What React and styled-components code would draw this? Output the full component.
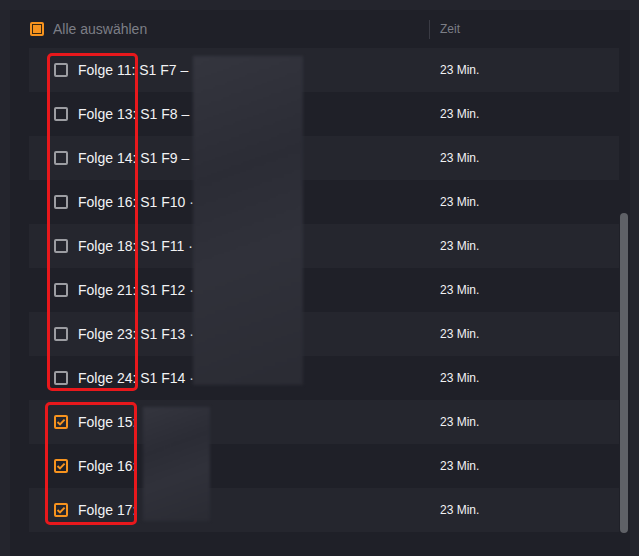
import styled, { createGlobalStyle } from 'styled-components'

const GlobalStyle = createGlobalStyle`
html, body {
    margin: 0;
    padding: 0;
    background: #24252d;
}
body {
    font-family: 'Liberation Sans', Arial, sans-serif;
}
`

const episodes = [
    { title: "Folge 11: S1 F7 – ", checked: false },
    { title: "Folge 13: S1 F8 – ", checked: false },
    { title: "Folge 14: S1 F9 – ", checked: false },
    { title: "Folge 16: S1 F10 · ", checked: false },
    { title: "Folge 18: S1 F11 · ", checked: false },
    { title: "Folge 21: S1 F12 · ", checked: false },
    { title: "Folge 23: S1 F13 · ", checked: false },
    { title: "Folge 24: S1 F14 · ", checked: false },
    { title: "Folge 15: ", checked: true },
    { title: "Folge 16: ", checked: true },
    { title: "Folge 17: ", checked: true },
]

export default function App() {
    return (
        <>
            <GlobalStyle />
            <Frame>
                <Panel>
                    <List>
                        <HeaderRow>
                            <TitleCell>
                                <AllBox />
                                <HeaderLabel>Alle auswählen</HeaderLabel>
                            </TitleCell>
                            <TimeHeader>Zeit</TimeHeader>
                        </HeaderRow>
                        {episodes.map((ep, i) => (
                            <Row key={i} striped={i % 2 === 0}>
                                <TitleCell>
                                    <Check checked={ep.checked}>
                                        {ep.checked && (
                                            <svg width="10" height="10" viewBox="0 0 10 10">
                                                <path d="M1.5 5 L4 7.4 L8.6 2.6" fill="none" stroke="#f7931e" strokeWidth="2" />
                                            </svg>
                                        )}
                                    </Check>
                                    <Title>{ep.title}</Title>
                                </TitleCell>
                                <Time>23 Min.</Time>
                            </Row>
                        ))}
                    </List>
                    <Track>
                        <Thumb />
                    </Track>
                </Panel>
                <Redact top={56} left={193} w={110} h={329} />
                <Redact top={407} left={143} w={67} h={114} />
                <Marker top={53} left={47} w={91} h={338} />
                <Marker top={402} left={45} w={92} h={123} />
            </Frame>
        </>
    )
}

const Frame = styled.div`
position: relative;
width: 639px;
height: 556px;
padding: 10px 9px 0 10px;
box-sizing: border-box;
overflow: hidden;
`
const Panel = styled.div`
display: flex;
height: 546px;
background: #1f2028;
padding-left: 19px;
`
const List = styled.div`
width: 590px;
display: flex;
flex-direction: column;
`
const HeaderRow = styled.div`
height: 38px;
display: flex;
align-items: center;
`
const Row = styled.div`
height: 44px;
display: flex;
align-items: center;
background: ${p => p.striped ? '#25262e' : 'transparent'};
`
const TitleCell = styled.div`
width: 400px;
display: flex;
align-items: center;
padding-left: 25px;
box-sizing: border-box;
`
const AllBox = styled.div`
width: 14px;
height: 14px;
margin-left: -24px;
margin-right: 9px;
box-sizing: border-box;
background: #f7931e;
border-radius: 2px;
padding: 2px;
&::after {
    content: '';
    display: block;
    width: 10px;
    height: 10px;
    box-sizing: border-box;
    border: 1px solid #3a2710;
}
`
const HeaderLabel = styled.span`
font-size: 14px;
color: #7c7e86;
`
const TimeHeader = styled.div`
border-left: 1px solid #3a3b44;
height: 19px;
line-height: 19px;
padding-left: 10px;
font-size: 12px;
color: #7c7e86;
`
const Check = styled.div`
width: 14px;
height: 14px;
box-sizing: border-box;
border: 2px solid ${p => p.checked ? '#f7931e' : '#9c9da2'};
border-radius: 2px;
display: flex;
align-items: center;
justify-content: center;
margin-right: 10px;
`
const Title = styled.span`
font-size: 14px;
color: #f2f2f4;
white-space: pre;
`
const Time = styled.div`
padding-left: 11px;
font-size: 12px;
color: #f2f2f4;
`
const Track = styled.div`
width: 8px;
margin-left: 1px;
display: flex;
flex-direction: column;
`
const Thumb = styled.div`
margin-top: 203px;
height: 320px;
border-radius: 4px;
background: #5f6167;
`
const Redact = styled.div`
position: absolute;
top: ${p => p.top}px;
left: ${p => p.left}px;
width: ${p => p.w}px;
height: ${p => p.h}px;
background: linear-gradient(160deg, #34353e 0%, #2b2c35 35%, #30313a 60%, #2a2b33 100%);
filter: blur(1.5px);
`
const Marker = styled.div`
position: absolute;
top: ${p => p.top}px;
left: ${p => p.left}px;
width: ${p => p.w}px;
height: ${p => p.h}px;
box-sizing: border-box;
border: 3px solid #e8181c;
border-radius: 5px;
`
